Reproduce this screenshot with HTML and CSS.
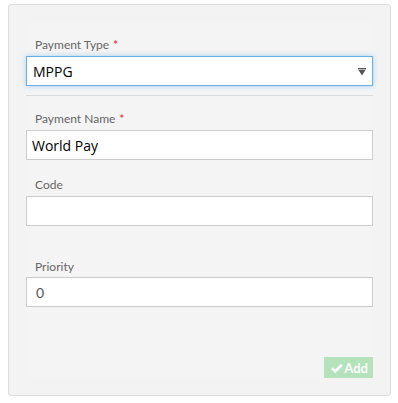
FILE: index.html
```html
<!DOCTYPE html>
<html lang="en">
<head>
    <meta charset="UTF-8">
    <meta name="viewport" content="width=device-width, initial-scale=1.0">
    <title>Payment Type</title>
    <link rel="stylesheet" href="styles.css">
</head>
<body>

    <div class="panel">
        <div class="panel-body">

            <!-- Payment type -->
            <div class="field">
                <label class="field-label">Payment Type <span class="req">*</span></label>
                <div class="select focused">
                    <span class="select-value">MPPG</span>
                    <svg class="caret" width="8" height="8" viewBox="0 0 8 8">
                        <rect x="0" y="0" width="8" height="1.4" fill="#555"/>
                        <polygon points="0.5,2 7.5,2 4,7.5" fill="#555"/>
                    </svg>
                </div>
            </div>

            <hr class="divider">

            <div class="field">
                <label class="field-label">Payment Name <span class="req">*</span></label>
                <input type="text" class="input" value="World Pay">
            </div>

            <div class="field field-code">
                <label class="field-label">Code</label>
                <input type="text" class="input">
            </div>

            <div class="field field-priority">
                <label class="field-label">Priority</label>
                <input type="text" class="input input-number" value="0">
            </div>

            <div class="actions">
                <button class="btn-add">
                    <svg width="12" height="10" viewBox="0 0 12 10">
                        <path d="M1 5.2 L4.2 8.4 L11 1.6" fill="none" stroke="#fff" stroke-width="2.6"/>
                    </svg>Add
                </button>
            </div>

        </div>
    </div>

</body>
</html>
```

FILE: styles.css
```css
body {
    font-family: 'Lato', sans-serif;
    margin: 0;
    padding: 4px 7px 0 8px;
    background-color: #fff;
    color: #333;
}

.panel {
    background-color: #f3f3f3;
    border: 1px solid #dedede;
    border-radius: 3px;
    padding: 17px 17px 17px 17px;
    height: 356px;
}

.panel-body {
    background-color: #f4f4f4;
    padding-top: 14px;
}

.field-label {
    display: block;
    font-size: 12px;
    line-height: 17px;
    color: #666;
    padding-left: 9px;
    margin-bottom: 3px;
}

.req {
    color: #e04848;
    font-size: 11px;
    font-weight: 700;
    vertical-align: top;
    margin-left: 1px;
}

.select {
    display: flex;
    align-items: center;
    justify-content: space-between;
    height: 28px;
    background-color: #fff;
    border: 1px solid #ccc;
    padding: 0 6px 0 6px;
}

.select.focused {
    border-color: #66afe9;
    box-shadow: 0 0 5px rgba(102, 175, 233, 0.55);
}

.select-value {
    font-family: 'Open Sans', sans-serif;
    font-size: 14px;
    color: #000;
}

.caret {
    margin-top: 2px;
}

.divider {
    border: none;
    border-top: 1px solid #dadada;
    margin: 9px 0 14px 0;
}

.input {
    display: block;
    box-sizing: border-box;
    width: 100%;
    height: 30px;
    margin: 0;
    border: 1px solid #ccc;
    border-radius: 0;
    background-color: #fff;
    padding: 0 5px;
    font-family: 'Open Sans', sans-serif;
    font-size: 14px;
    color: #000;
    outline: none;
}

.input-number {
    font-family: 'Lato', sans-serif;
    font-size: 14px;
    color: #555;
    padding-left: 9px;
}

.field-code {
    margin-top: 16px;
}

.field-priority {
    margin-top: 32px;
}

.field-priority .field-label {
    margin-bottom: 2px;
}

.actions {
    display: flex;
    justify-content: flex-end;
    margin-top: 50px;
}

.btn-add {
    display: flex;
    align-items: center;
    gap: 1px;
    height: 21px;
    padding: 0 5px 0 7px;
    border: none;
    background-color: #b3e2bb;
    color: #fff;
    font-family: 'Lato', sans-serif;
    font-size: 13px;
    font-weight: 700;
    cursor: default;
}
```
